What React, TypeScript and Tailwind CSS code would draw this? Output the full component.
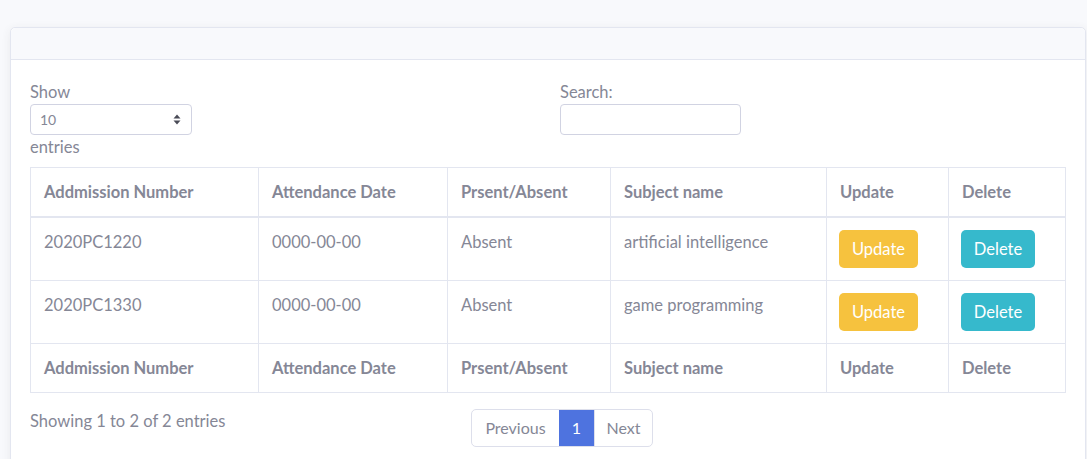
const rows = [
  { adm: "2020PC1220", date: "0000-00-00", status: "Absent", subject: "artificial intelligence" },
  { adm: "2020PC1330", date: "0000-00-00", status: "Absent", subject: "game programming" },
];

const cols = ["Addmission Number", "Attendance Date", "Prsent/Absent", "Subject name", "Update", "Delete"];
const widths = ["w-[228px]", "w-[189px]", "w-[163px]", "w-[216px]", "w-[122px]", ""];

function HeadRow({ foot }: { foot?: boolean }) {
  return (
    <tr className={foot ? "" : "border-b-2 border-[#e3e6f0]"}>
      {cols.map((c, i) => (
        <th
          key={c}
          className={`border border-[#e3e6f0] px-[13px] py-3 text-left font-bold leading-6 ${foot ? "" : widths[i]}`}
        >
          {c}
        </th>
      ))}
    </tr>
  );
}

export default function App() {
  return (
    <div
      className="min-h-[459px] bg-[#f8f9fc] pt-[27px] pl-[10px] pr-[1px] text-[#858796] text-[16.5px]"
      style={{ fontFamily: "Lato, 'Open Sans', sans-serif" }}
    >
      <div className="rounded-[5px] border border-[#e3e6f0] bg-white shadow-[0_2px_10px_rgba(58,59,69,0.08)]">
        <div className="h-[32px] border-b border-[#e3e6f0] bg-[#f8f9fc] rounded-t-[5px]" />
        <div className="px-[19px] pt-[20px] pb-6">
          <div className="grid grid-cols-2 gap-6">
            <div>
              <div className="leading-6">Show</div>
              <div className="flex h-[31px] w-[162px] items-center justify-between rounded-[4px] border border-[#d1d3e2] pl-[9px] pr-[10px] text-[14px]">
                <span>10</span>
                <svg width="8" height="11" viewBox="0 0 8 11" className="text-[#4a4b57]">
                  <path d="M4 0.5 L7.5 4.5 H0.5 Z" fill="currentColor" />
                  <path d="M4 10.5 L7.5 6.5 H0.5 Z" fill="currentColor" />
                </svg>
              </div>
              <div className="leading-6">entries</div>
            </div>
            <div>
              <div className="leading-6">Search:</div>
              <div className="h-[31px] w-[181px] rounded-[4px] border border-[#d1d3e2]" />
            </div>
          </div>

          <table className="mt-2 w-full border-collapse border border-[#e3e6f0]">
            <thead>
              <HeadRow />
            </thead>
            <tbody>
              {rows.map((r) => (
                <tr key={r.adm}>
                  <td className="border border-[#e3e6f0] px-[13px] pt-[12px] pb-3 align-top leading-6">{r.adm}</td>
                  <td className="border border-[#e3e6f0] px-[13px] pt-[12px] pb-3 align-top leading-6">{r.date}</td>
                  <td className="border border-[#e3e6f0] px-[13px] pt-[12px] pb-3 align-top leading-6">{r.status}</td>
                  <td className="border border-[#e3e6f0] px-[13px] pt-[12px] pb-3 align-top leading-6">{r.subject}</td>
                  <td className="border border-[#e3e6f0] px-3 py-3 align-top">
                    <button className="h-[38px] w-[79px] rounded-[5px] bg-[#f6c23e] text-white leading-6">Update</button>
                  </td>
                  <td className="border border-[#e3e6f0] px-3 py-3 align-top">
                    <button className="h-[38px] w-[74px] rounded-[5px] bg-[#36b9cc] text-white leading-6">Delete</button>
                  </td>
                </tr>
              ))}
            </tbody>
            <tfoot>
              <HeadRow foot />
            </tfoot>
          </table>

          <div className="mt-[16px] grid grid-cols-[431px_1fr] gap-0">
            <div className="leading-6">Showing 1 to 2 of 2 entries</div>
            <div className="pl-[10px]">
              <div className="flex h-[38px] w-fit overflow-hidden rounded-[5px] border border-[#dddfeb] text-[16px]">
                <span className="flex w-[87px] items-center justify-center">Previous</span>
                <span className="flex w-[35px] items-center justify-center bg-[#4e73df] text-white">1</span>
                <span className="flex w-[58px] items-center justify-center border-l border-[#dddfeb]">Next</span>
              </div>
            </div>
          </div>
        </div>
      </div>
    </div>
  );
}
